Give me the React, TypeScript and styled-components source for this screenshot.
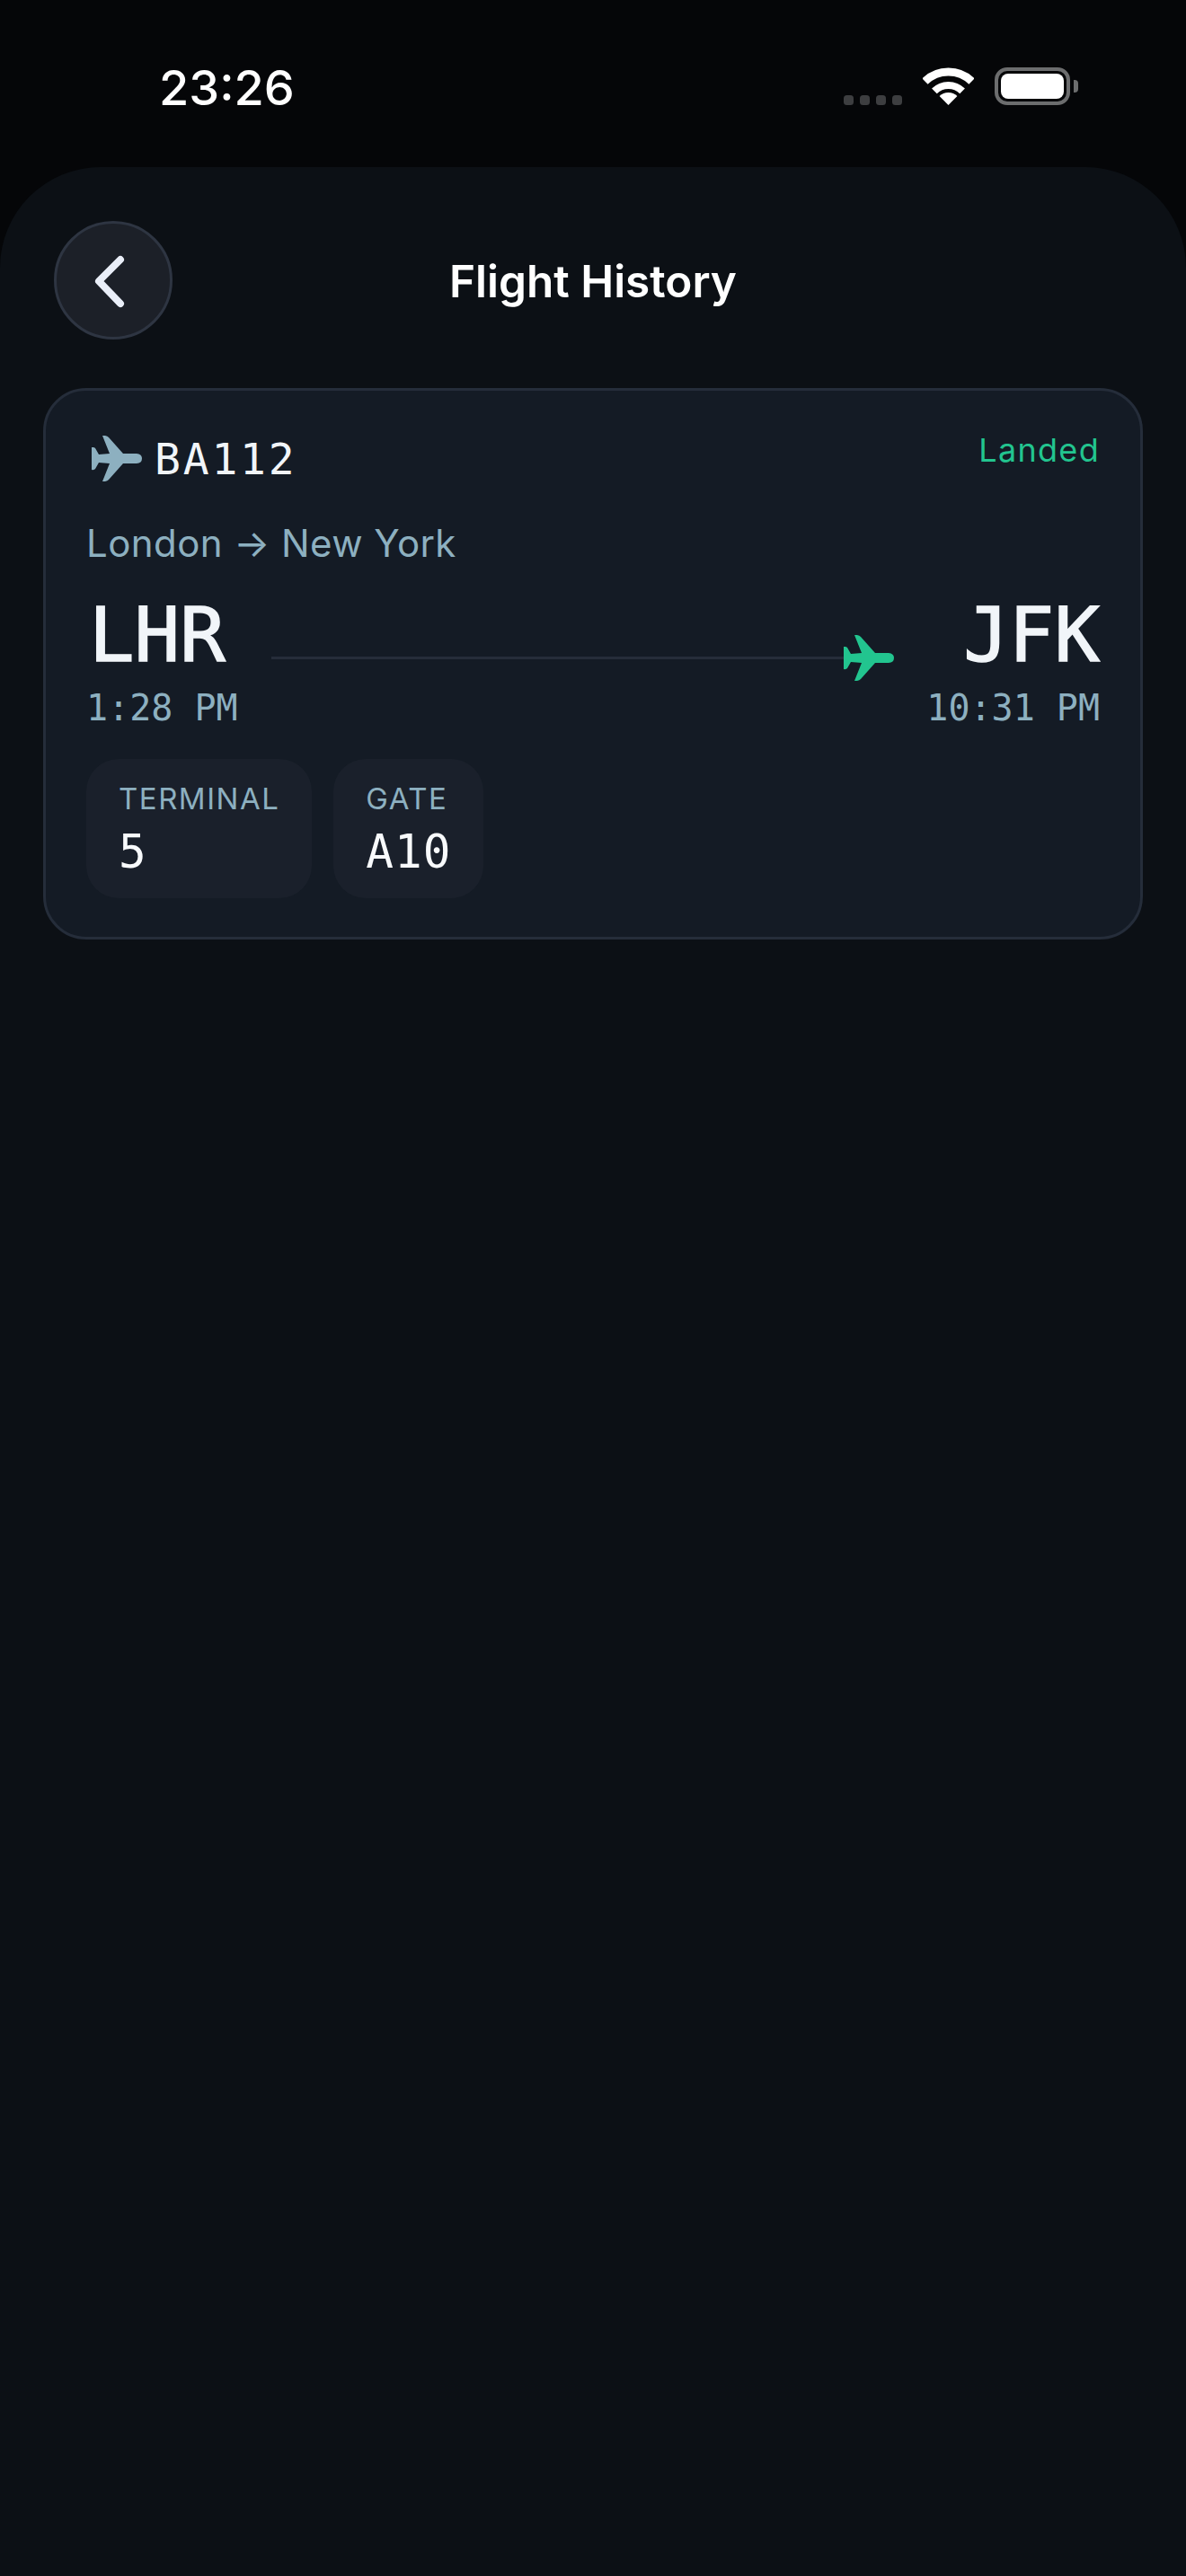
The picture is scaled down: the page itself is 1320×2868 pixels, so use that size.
import React from 'react';
import styled, { createGlobalStyle } from 'styled-components';

const Global = createGlobalStyle`
  html, body { margin: 0; padding: 0; background: #050608; }
  * { box-sizing: border-box; }
`;
const sans = `Inter, "Liberation Sans", sans-serif`;
const mono = `"DejaVu Sans Mono", "Liberation Mono", monospace`;
const muted = '#8db0c0';

const Screen = styled.div`
  width: 1320px; height: 2868px; background: #050608; display: flex; flex-direction: column;
  overflow: hidden; font-family: ${sans};
`;
const StatusBar = styled.div`
  height: 186px; flex: none; display: flex; justify-content: space-between; padding: 66px 125px 0 177px;
`;
const Time = styled.div`
  font: 500 54px/63px ${sans}; color: #fff;
`;
const StatusIcons = styled.div`
  display: flex; align-items: flex-start; padding-top: 9px;
`;
const Dots = styled.div`
  display: flex; gap: 7px; margin-top: 31px; margin-right: 23px;
`;
const Dot = styled.span`
  width: 11px; height: 11px; border-radius: 3.5px; background: #3d3e40;
`;
const Wifi = styled.svg`
  width: 57px; height: 42px; display: block; margin-right: 23px;
`;
const Battery = styled.div`
  width: 84px; height: 42px; border: 4px solid #6c6d6e; border-radius: 14px; padding: 3px;
  margin-right: 4px; position: relative;
  &::after {
    content: ''; position: absolute; right: -13px; top: 10px; width: 5px; height: 14px;
    background: #6c6d6e; border-radius: 0 4px 4px 0;
  }
`;
const BatteryFill = styled.div`
  width: 100%; height: 100%; background: #fff; border-radius: 8px;
`;
const Panel = styled.main`
  flex: 1; background: #0c1015; border-radius: 112px 112px 0 0; padding: 60px 48px 0;
`;
const Header = styled.header`
  display: grid; grid-template-columns: 132px 1fr 132px; align-items: center; padding: 0 12px 0 12px;
  margin-bottom: 54px;
`;
const Back = styled.button`
  width: 132px; height: 132px; border-radius: 50%; background: #1c2028; border: 3px solid #2e3542;
  padding: 0; display: flex; align-items: center; justify-content: center;
`;
const BackIcon = styled.svg`
  width: 132px; height: 132px; flex: none; display: block;
`;
const Title = styled.h1`
  margin: 0; padding-top: 2px; text-align: center; font: 600 49.5px/62px ${sans}; color: #fff;
`;
const Card = styled.section`
  height: 614px; background: #141b25; border: 3px solid #252d3a; border-radius: 48px; padding: 45px;
`;
const TopRow = styled.div`
  display: flex; justify-content: space-between; align-items: flex-start;
`;
const FlightId = styled.div`
  display: flex; align-items: center; gap: 14px; padding-left: 6px;
`;
const PlaneIcon = styled.svg`
  width: 56px; height: 51px; display: block; flex: none;
`;
const FlightCode = styled.span`
  font: 400 48px/58px ${mono}; color: #f1f5f9; letter-spacing: 2.8px; padding-top: 2px;
`;
const Status = styled.span`
  font: 400 36px/44px ${sans}; color: #22c58f; letter-spacing: 1.3px; margin-top: -1px;
`;
const Route = styled.div`
  font: 400 42px/58px ${sans}; color: ${muted}; letter-spacing: 0.42px; margin-top: 36px;
`;
const Legs = styled.div`
  display: flex; align-items: flex-start; margin-top: 24px;
`;
const Leg = styled.div<{ $end?: boolean }>`
  flex: none; display: flex; flex-direction: column; align-items: ${p => (p.$end ? 'flex-end' : 'flex-start')};
`;
const Code = styled.div`
  font: 400 84px/98px ${mono}; color: #f1f5f9; padding: 0 0 0 3px; -webkit-text-stroke: 1.5px #f1f5f9;
`;
const LegTime = styled.div`
  font: 400 40px/48px ${mono}; color: ${muted}; margin-top: 8px;
`;
const Track = styled.div`
  flex: 1; display: flex; align-items: center; margin: 49px 36px 0 37px;
`;
const Line = styled.div`
  flex: 1; height: 3px; background: #262d3a;
`;
const Chips = styled.div`
  display: flex; gap: 24px; margin-top: 33px;
`;
const Chip = styled.div`
  height: 155px; background: #1a202b; border-radius: 36px; padding: 24px 36px;
  display: flex; flex-direction: column;
`;
const ChipLabel = styled.div`
  font: 400 33px/40px ${sans}; color: ${muted}; letter-spacing: 1.5px;
`;
const ChipValue = styled.div`
  font: 400 51px/58px ${mono}; color: #f8fafc; margin-top: 11px; letter-spacing: 1px;
`;

const Plane = ({ color }: { color: string }) => (
  <PlaneIcon viewBox="0 0 56 51">
    <path
      fill={color}
      d="M12 0 Q17 -0.5 19 2 L35 20 L50 20 Q56 20.500 56 25.500 Q56 30.500 50 31 L35 31 L19 49 Q17 51.500 12 51 L20 31 L8 30 L4 37 Q3 38.500 0 38 L0 13 Q3 12.500 4 14 L8 21 L20 20 Z"
    />
  </PlaneIcon>
);

export default function App() {
  return (
    <Screen>
      <Global />
      <StatusBar>
        <Time>23:26</Time>
        <StatusIcons>
          <Dots>
            <Dot /><Dot /><Dot /><Dot />
          </Dots>
          <Wifi viewBox="0 0 57 42">
            <path d="M2.500 15.500 A37.500 37.500 0 0 1 54.500 15.500" fill="none" stroke="#fff" strokeWidth="9" />
            <path d="M12.900 26.400 A22 22 0 0 1 44.100 26.400" fill="none" stroke="#fff" strokeWidth="8" />
            <path d="M28.500 42 L18.600 32 A14 14 0 0 1 38.400 32 Z" fill="#fff" />
          </Wifi>
          <Battery><BatteryFill /></Battery>
        </StatusIcons>
      </StatusBar>
      <Panel>
        <Header>
          <Back aria-label="Back">
            <BackIcon viewBox="0 0 132 132">
              <path d="M74 43 L50 67 L74 92" fill="none" stroke="#e9eef8" strokeWidth="8" strokeLinecap="round" strokeLinejoin="round" />
            </BackIcon>
          </Back>
          <Title>Flight History</Title>
          <span />
        </Header>
        <Card>
          <TopRow>
            <FlightId>
              <Plane color={muted} />
              <FlightCode>BA112</FlightCode>
            </FlightId>
            <Status>Landed</Status>
          </TopRow>
          <Route>London → New York</Route>
          <Legs>
            <Leg>
              <Code>LHR</Code>
              <LegTime>1:28 PM</LegTime>
            </Leg>
            <Track>
              <Line />
              <Plane color="#22c58f" />
            </Track>
            <Leg $end>
              <Code>JFK</Code>
              <LegTime>10:31 PM</LegTime>
            </Leg>
          </Legs>
          <Chips>
            <Chip>
              <ChipLabel>TERMINAL</ChipLabel>
              <ChipValue>5</ChipValue>
            </Chip>
            <Chip>
              <ChipLabel>GATE</ChipLabel>
              <ChipValue>A10</ChipValue>
            </Chip>
          </Chips>
        </Card>
      </Panel>
    </Screen>
  );
}
